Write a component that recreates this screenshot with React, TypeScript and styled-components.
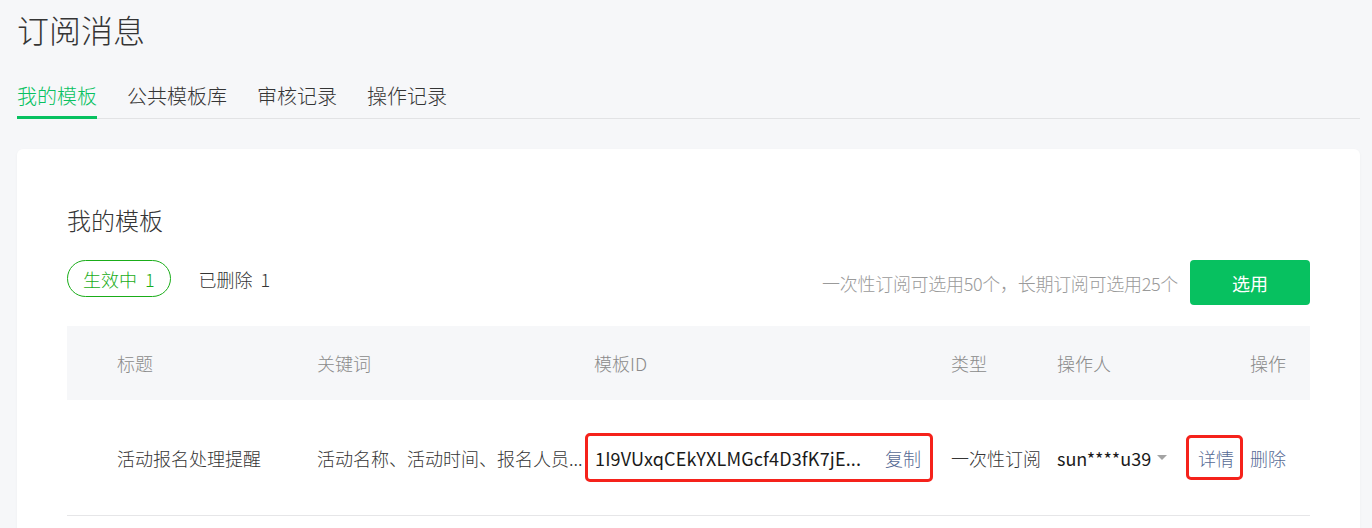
import React from "react";
import styled, { createGlobalStyle } from "styled-components";

const GlobalStyle = createGlobalStyle`
  html, body {
    margin: 0;
    padding: 0;
    background: #f6f7f9;
    font-family: "Noto Sans CJK SC", "Noto Sans", sans-serif;
    font-weight: 300;
    color: #353535;
  }
  * { box-sizing: border-box; }
`;

const Page = styled.div`
  padding: 7px 12px 0 17px;
  min-height: 528px;
`;

const Title = styled.h1`
  margin: 0;
  font-size: 32px;
  font-weight: 300;
  line-height: 44px;
  color: #353535;
`;

const TabBar = styled.nav`
  display: flex;
  gap: 30px;
  margin-top: 31px;
  border-bottom: 1px solid #e2e3e5;
`;

const Tab = styled.div<{ $active?: boolean }>`
  font-size: 20px;
  line-height: 28px;
  padding-bottom: 6px;
  margin-bottom: -1px;
  border-bottom: 3px solid ${(p) => (p.$active ? "#07c160" : "transparent")};
  color: ${(p) => (p.$active ? "#07c160" : "#353535")};
  cursor: pointer;
`;

const Card = styled.section`
  margin-top: 30px;
  background: #fff;
  border-radius: 6px;
  box-shadow: 0 1px 3px rgba(0, 0, 0, 0.04);
  padding: 54px 50px 60px;
`;

const CardTitle = styled.h2`
  margin: 0;
  font-size: 24px;
  font-weight: 300;
  line-height: 34px;
  color: #353535;
`;

const FilterRow = styled.div`
  display: flex;
  justify-content: space-between;
  align-items: flex-start;
  margin-top: 23px;
`;

const FilterGroup = styled.div`
  display: flex;
  align-items: center;
  gap: 28px;
  height: 37px;
`;

const Pill = styled.div<{ $active?: boolean }>`
  display: flex;
  align-items: center;
  height: 37px;
  padding: ${(p) => (p.$active ? "0 15px" : "0")};
  border: ${(p) => (p.$active ? "1px solid #1aad19" : "none")};
  border-radius: 19px;
  font-size: 18px;
  color: ${(p) => (p.$active ? "#1aad19" : "#353535")};
  white-space: pre;
`;

const ActionGroup = styled.div`
  display: flex;
  align-items: center;
  gap: 12px;
  height: 45px;
`;

const Hint = styled.span`
  font-size: 18px;
  letter-spacing: -0.3px;
  color: #9a9a9a;
`;

const PrimaryButton = styled.button`
  width: 120px;
  height: 45px;
  border: none;
  border-radius: 4px;
  background: #07c160;
  color: #fff;
  font-family: inherit;
  font-weight: 400;
  font-size: 18px;
  cursor: pointer;
`;

const Table = styled.div`
  margin-top: 21px;
`;

const Row = styled.div<{ $head?: boolean }>`
  display: grid;
  grid-template-columns: 250px 277px 357px 106px 1fr 140px;
  align-items: center;
  height: ${(p) => (p.$head ? "74px" : "116px")};
  background: ${(p) => (p.$head ? "#f6f7f9" : "#fff")};
  border-bottom: ${(p) => (p.$head ? "none" : "1px solid #e6e6e8")};
  font-size: 18px;
  color: ${(p) => (p.$head ? "#8a8a8a" : "#353535")};
`;

const Cell = styled.div<{ $first?: boolean; $end?: boolean }>`
  display: flex;
  align-items: center;
  justify-content: ${(p) => (p.$end ? "flex-end" : "flex-start")};
  padding-left: ${(p) => (p.$first ? "50px" : "0")};
  padding-right: ${(p) => (p.$end ? "24px" : "0")};
  white-space: nowrap;
  min-width: 0;
`;

const IdBox = styled.div`
  display: flex;
  align-items: center;
  justify-content: space-between;
  width: 348px;
  height: 49px;
  margin-left: -9px;
  padding: 0 9px 0 7px;
  border: 3px solid #f5221b;
  border-radius: 5px;
`;

const IdText = styled.span`
  font-weight: 400;
  letter-spacing: 0.15px;
  color: #1a1a1a;
`;

const Link = styled.a`
  color: #576b95;
  text-decoration: none;
  cursor: pointer;
`;

const DetailBox = styled.div`
  display: flex;
  align-items: center;
  height: 45px;
  padding: 0 6px 0 9px;
  border: 3px solid #f5221b;
  border-radius: 5px;
  margin-right: 7px;
`;

const Operator = styled.span`
  display: flex;
  align-items: center;
  gap: 6px;
  font-weight: 400;
  color: #1a1a1a;
`;

const Caret = styled.span`
  width: 0;
  height: 0;
  border-left: 5px solid transparent;
  border-right: 5px solid transparent;
  border-top: 5px solid #a3a3a3;
`;

export default function App() {
  return (
    <>
      <GlobalStyle />
      <Page>
        <Title>订阅消息</Title>
        <TabBar>
          <Tab $active>我的模板</Tab>
          <Tab>公共模板库</Tab>
          <Tab>审核记录</Tab>
          <Tab>操作记录</Tab>
        </TabBar>
        <Card>
          <CardTitle>我的模板</CardTitle>
          <FilterRow>
            <FilterGroup>
              <Pill $active>生效中  1</Pill>
              <Pill>已删除  1</Pill>
            </FilterGroup>
            <ActionGroup>
              <Hint>一次性订阅可选用50个，长期订阅可选用25个</Hint>
              <PrimaryButton>选用</PrimaryButton>
            </ActionGroup>
          </FilterRow>
          <Table>
            <Row $head>
              <Cell $first>标题</Cell>
              <Cell>关键词</Cell>
              <Cell>模板ID</Cell>
              <Cell>类型</Cell>
              <Cell>操作人</Cell>
              <Cell $end>操作</Cell>
            </Row>
            <Row>
              <Cell $first>活动报名处理提醒</Cell>
              <Cell>活动名称、活动时间、报名人员...</Cell>
              <Cell>
                <IdBox>
                  <IdText>1I9VUxqCEkYXLMGcf4D3fK7jE...</IdText>
                  <Link>复制</Link>
                </IdBox>
              </Cell>
              <Cell>一次性订阅</Cell>
              <Cell>
                <Operator>
                  sun****u39
                  <Caret />
                </Operator>
              </Cell>
              <Cell $end>
                <DetailBox>
                  <Link>详情</Link>
                </DetailBox>
                <Link>删除</Link>
              </Cell>
            </Row>
          </Table>
        </Card>
      </Page>
    </>
  );
}
